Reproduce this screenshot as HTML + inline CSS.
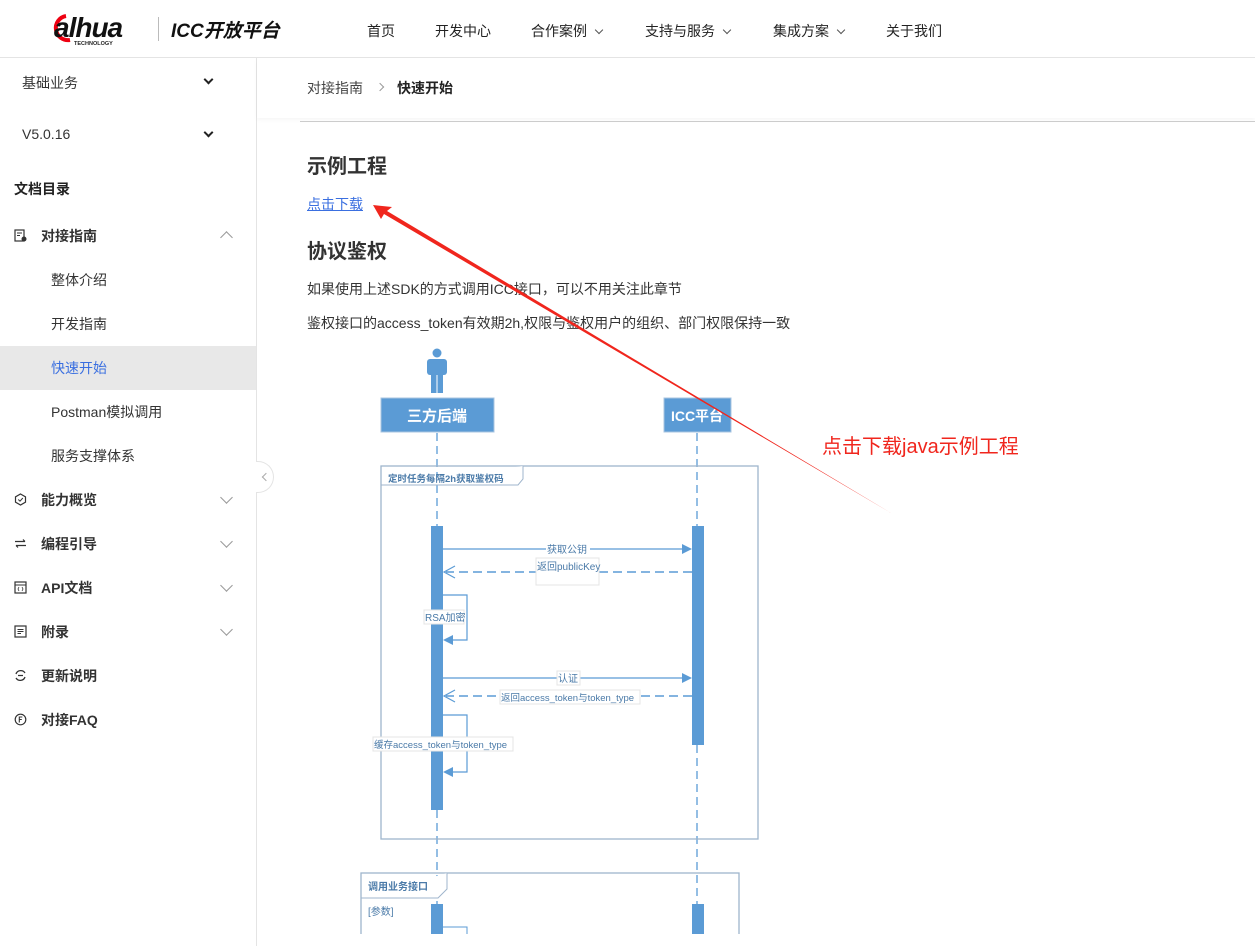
<!DOCTYPE html>
<html><head><meta charset="utf-8">
<style>
*{margin:0;padding:0;box-sizing:border-box}
body{width:1255px;height:946px;overflow:hidden;background:#fff;font-family:"Liberation Sans","Noto Sans CJK SC",sans-serif;color:#333;position:relative}
.a{position:absolute;white-space:nowrap}
.nav{font-size:14px;color:#222;top:21px}
.chev{display:inline-block;width:6px;height:6px;border-right:1.2px solid #555;border-bottom:1.2px solid #555;transform:rotate(45deg);margin-left:9px;position:relative;top:-3px}
.side{font-size:14px;color:#333}
.b{font-weight:bold}
.sc{position:absolute;left:222px;width:9px;height:9px;border-right:1.2px solid #999;border-bottom:1.2px solid #999;transform:rotate(45deg)}
.ic{position:absolute;left:14px;width:13px;height:13px}
</style></head><body>
<!-- header -->
<svg class="a" style="left:44px;top:10px" width="110" height="38">
<path d="M22 6A12 12 0 1 0 26 30" fill="none" stroke="#e01" stroke-width="4"/>
<text x="10" y="27" font-family="Liberation Sans,sans-serif" font-style="italic" font-weight="bold" font-size="28" fill="#111" letter-spacing="-1">alhua</text>
<text x="30" y="35" font-family="Liberation Sans,sans-serif" font-weight="bold" font-size="5.5" fill="#222">TECHNOLOGY</text>
</svg>
<div class="a" style="left:158px;top:17px;width:1px;height:24px;background:#bbb"></div>
<div class="a" style="left:171px;top:16px;font:italic bold 19px 'Liberation Sans','Noto Sans CJK SC',sans-serif;color:#111">ICC开放平台</div>
<div class="a nav" style="left:367px">首页</div>
<div class="a nav" style="left:435px">开发中心</div>
<div class="a nav" style="left:531px">合作案例<span class="chev"></span></div>
<div class="a nav" style="left:645px">支持与服务<span class="chev"></span></div>
<div class="a nav" style="left:773px">集成方案<span class="chev"></span></div>
<div class="a nav" style="left:886px">关于我们</div>
<div class="a" style="left:0;top:57px;width:1255px;height:1px;background:#e4e4e4"></div>
<!-- sidebar -->
<div class="a" style="left:256px;top:58px;width:1px;height:888px;background:#e4e4e4"></div>
<div class="a side" style="left:22px;top:73px">基础业务</div><div class="a" style="left:205px;top:76px;width:7px;height:7px;border-right:2px solid #222;border-bottom:2px solid #222;transform:rotate(45deg)"></div>
<div class="a side" style="left:22px;top:126px">V5.0.16</div><div class="a" style="left:205px;top:129px;width:7px;height:7px;border-right:2px solid #222;border-bottom:2px solid #222;transform:rotate(45deg)"></div>
<div class="a side b" style="left:14px;top:179px;color:#222">文档目录</div>
<svg class="ic" style="top:229px" viewBox="0 0 13 13"><rect x="1" y="1" width="9" height="11" fill="none" stroke="#333" stroke-width="1.2"/><line x1="3" y1="4" x2="8" y2="4" stroke="#333"/><line x1="3" y1="6.5" x2="6" y2="6.5" stroke="#333"/><circle cx="10" cy="10" r="2.5" fill="#333"/></svg>
<div class="a side b" style="left:41px;top:226px">对接指南</div>
<div class="a" style="left:222px;top:233px;width:9px;height:9px;border-left:1.2px solid #999;border-top:1.2px solid #999;transform:rotate(45deg)"></div>
<div class="a side" style="left:51px;top:270px">整体介绍</div>
<div class="a side" style="left:51px;top:314px">开发指南</div>
<div class="a" style="left:0;top:346px;width:256px;height:44px;background:#e8e8e8"></div>
<div class="a side" style="left:51px;top:358px;color:#3a6fe0">快速开始</div>
<div class="a side" style="left:51px;top:402px">Postman模拟调用</div>
<div class="a side" style="left:51px;top:446px">服务支撑体系</div>
<div class="a" style="left:256px;top:461px;width:18px;height:32px;border:1px solid #e4e4e4;border-left:none;border-radius:0 16px 16px 0;background:#fff"></div>
<div class="a" style="left:263px;top:474px;width:6px;height:6px;border-left:1px solid #aaa;border-bottom:1px solid #aaa;transform:rotate(45deg)"></div>
<svg class="ic" style="top:493px" viewBox="0 0 13 13"><polygon points="6.5,1 11.5,3.8 11.5,9.2 6.5,12 1.5,9.2 1.5,3.8" fill="none" stroke="#333" stroke-width="1.2"/><polyline points="4.3,6.5 6,8.2 8.8,5" fill="none" stroke="#333"/></svg>
<div class="a side b" style="left:41px;top:490px">能力概览</div><div class="sc" style="top:493px"></div>
<svg class="ic" style="top:537px" viewBox="0 0 13 13"><path d="M1 4.5H11M9 2.5L11 4.5M12 8.5H2M4 10.5L2 8.5" fill="none" stroke="#333" stroke-width="1.2"/></svg>
<div class="a side b" style="left:41px;top:534px">编程引导</div><div class="sc" style="top:537px"></div>
<svg class="ic" style="top:581px" viewBox="0 0 13 13"><rect x="1" y="1" width="11" height="11" fill="none" stroke="#333" stroke-width="1.2"/><line x1="1" y1="4" x2="12" y2="4" stroke="#333"/><path d="M5 6L4 8L5 10M8 6L9 8L8 10" fill="none" stroke="#333" stroke-width=".8"/></svg>
<div class="a side b" style="left:41px;top:578px">API文档</div><div class="sc" style="top:581px"></div>
<svg class="ic" style="top:625px" viewBox="0 0 13 13"><rect x="1" y="1" width="11" height="11" fill="none" stroke="#333" stroke-width="1.2"/><path d="M3.5 4.5H9.5M3.5 6.5H9.5M3.5 8.5H7" stroke="#333"/></svg>
<div class="a side b" style="left:41px;top:622px">附录</div><div class="sc" style="top:625px"></div>
<svg class="ic" style="top:669px" viewBox="0 0 13 13"><path d="M2 5A5 5 0 0 1 11 4M11 8A5 5 0 0 1 2 9M4 6.5H9" fill="none" stroke="#333" stroke-width="1.3"/></svg>
<div class="a side b" style="left:41px;top:666px">更新说明</div>
<svg class="ic" style="top:713px" viewBox="0 0 13 13"><circle cx="6.5" cy="6.5" r="5.3" fill="none" stroke="#333" stroke-width="1.2"/><path d="M5.3 9.5V4H8.3M5.3 6.5H7.8" fill="none" stroke="#333" stroke-width="1.1"/></svg>
<div class="a side b" style="left:41px;top:710px">对接FAQ</div>
<!-- content -->
<div class="a" style="left:257px;top:58px;width:998px;height:60px;background:#fff;box-shadow:0 2px 4px rgba(0,0,0,.04)"></div>
<div class="a" style="left:307px;top:78px;font-size:14px;color:#444">对接指南</div>
<div class="a" style="left:377px;top:84px;width:6px;height:6px;border-right:1px solid #999;border-top:1px solid #999;transform:rotate(45deg)"></div>
<div class="a" style="left:397px;top:78px;font-size:14px;color:#222;font-weight:bold">快速开始</div>
<div class="a" style="left:300px;top:121px;width:955px;height:1px;background:#ccc"></div>
<div class="a" style="left:307px;top:150px;font-size:20px;font-weight:bold;color:#333">示例工程</div>
<div class="a" style="left:307px;top:194px;font-size:14px;color:#3a6fe0;text-decoration:underline">点击下载</div>
<div class="a" style="left:307px;top:235px;font-size:20px;font-weight:bold;color:#333">协议鉴权</div>
<div class="a" style="left:307px;top:279px;font-size:14px;color:#333">如果使用上述SDK的方式调用ICC接口，可以不用关注此章节</div>
<div class="a" style="left:307px;top:313px;font-size:14px;color:#333">鉴权接口的access_token有效期2h,权限与鉴权用户的组织、部门权限保持一致</div>
<!-- diagram -->
<svg class="a" style="left:0;top:0" width="1255" height="946" font-family="Liberation Sans,Noto Sans CJK SC,sans-serif">
<g fill="#5b9bd5">
<circle cx="437" cy="353" r="4.5"/><rect x="427" y="359" width="20" height="16" rx="3"/><rect x="431" y="372" width="12" height="21"/>
</g>
<line x1="437" y1="375" x2="437" y2="393" stroke="#fff" stroke-width="1"/>
<rect x="381" y="398" width="113" height="34" fill="#5b9bd5" stroke="#a8c4e0"/>
<text x="437" y="421" fill="#fff" font-size="15" font-weight="bold" text-anchor="middle">三方后端</text>
<rect x="664" y="398" width="67" height="34" fill="#5b9bd5" stroke="#a8c4e0"/>
<text x="697" y="421" fill="#fff" font-size="14" font-weight="bold" text-anchor="middle">ICC平台</text>
<g stroke="#5b9bd5" stroke-dasharray="8,5" stroke-width="1.3">
<line x1="437" y1="433" x2="437" y2="946"/><line x1="697" y1="433" x2="697" y2="946"/></g>
<rect x="381" y="466" width="377" height="373" fill="none" stroke="#9fb5cc" stroke-width="1.3"/>
<path d="M381 485H518L523 479V466" fill="#fff" stroke="#9fb5cc"/>
<text x="388" y="482" fill="#4a7aa8" font-size="9.5" font-weight="bold">定时任务每隔2h获取鉴权码</text>
<rect x="431" y="526" width="12" height="284" fill="#5b9bd5"/>
<rect x="692" y="526" width="12" height="219" fill="#5b9bd5"/>
<g stroke="#5b9bd5" stroke-width="1.2" fill="none">
<line x1="443" y1="549" x2="682" y2="549"/>
<line x1="692" y1="572" x2="446" y2="572" stroke-dasharray="9,5" stroke-width="1.5"/>
<polyline points="455,566 444,572 455,578"/>
<polyline points="443,595 467,595 467,640 450,640"/>
<line x1="443" y1="678" x2="682" y2="678"/>
<line x1="692" y1="696" x2="446" y2="696" stroke-dasharray="9,5" stroke-width="1.5"/>
<polyline points="455,690 444,696 455,702"/>
<polyline points="443,715 467,715 467,772 450,772"/>
</g>
<g fill="#5b9bd5"><polygon points="682,544 692,549 682,554"/><polygon points="443,640 453,635 453,645"/><polygon points="682,673 692,678 682,683"/><polygon points="443,772 453,767 453,777"/></g>
<g font-size="10" fill="#4a7aa8">
<rect x="546" y="543" width="44" height="13" fill="#fff"/><text x="547" y="553">获取公钥</text>
<rect x="536" y="558" width="63" height="27" fill="#fff" stroke="#e4e4e4"/><text x="537" y="570">返回publicKey</text>
<rect x="424" y="610" width="40" height="14" fill="#fff" stroke="#e4e4e4"/><text x="425" y="621">RSA加密</text>
<rect x="557" y="671" width="23" height="14" fill="#fff" stroke="#e4e4e4"/><text x="558" y="682">认证</text>
<rect x="500" y="690" width="140" height="14" fill="#fff" stroke="#e4e4e4"/><text x="501" y="701" font-size="9.5">返回access_token与token_type</text>
<rect x="373" y="737" width="140" height="14" fill="#fff" stroke="#e4e4e4"/><text x="374" y="748" font-size="9.5">缓存access_token与token_type</text>
</g>
<rect x="361" y="873" width="378" height="80" fill="none" stroke="#9fb5cc" stroke-width="1.3"/>
<path d="M361 898H438L447 889V873" fill="#fff" stroke="#9fb5cc"/>
<text x="368" y="890" fill="#4a7aa8" font-size="10" font-weight="bold">调用业务接口</text>
<text x="368" y="915" fill="#4a7aa8" font-size="10">[参数]</text>
<rect x="431" y="904" width="12" height="42" fill="#5b9bd5"/>
<rect x="692" y="904" width="12" height="42" fill="#5b9bd5"/>
<polyline points="443,927 467,927 467,946" fill="none" stroke="#5b9bd5"/>
<rect x="257" y="934" width="998" height="12" fill="#fff"/>
<!-- red arrow -->
<polygon points="373,205 392,207 387,211 891,513 384,214 381,219" fill="#f0261d"/>
<text x="822" y="453" fill="#f0261d" font-size="20">点击下载java示例工程</text>
</svg>
</body></html>
